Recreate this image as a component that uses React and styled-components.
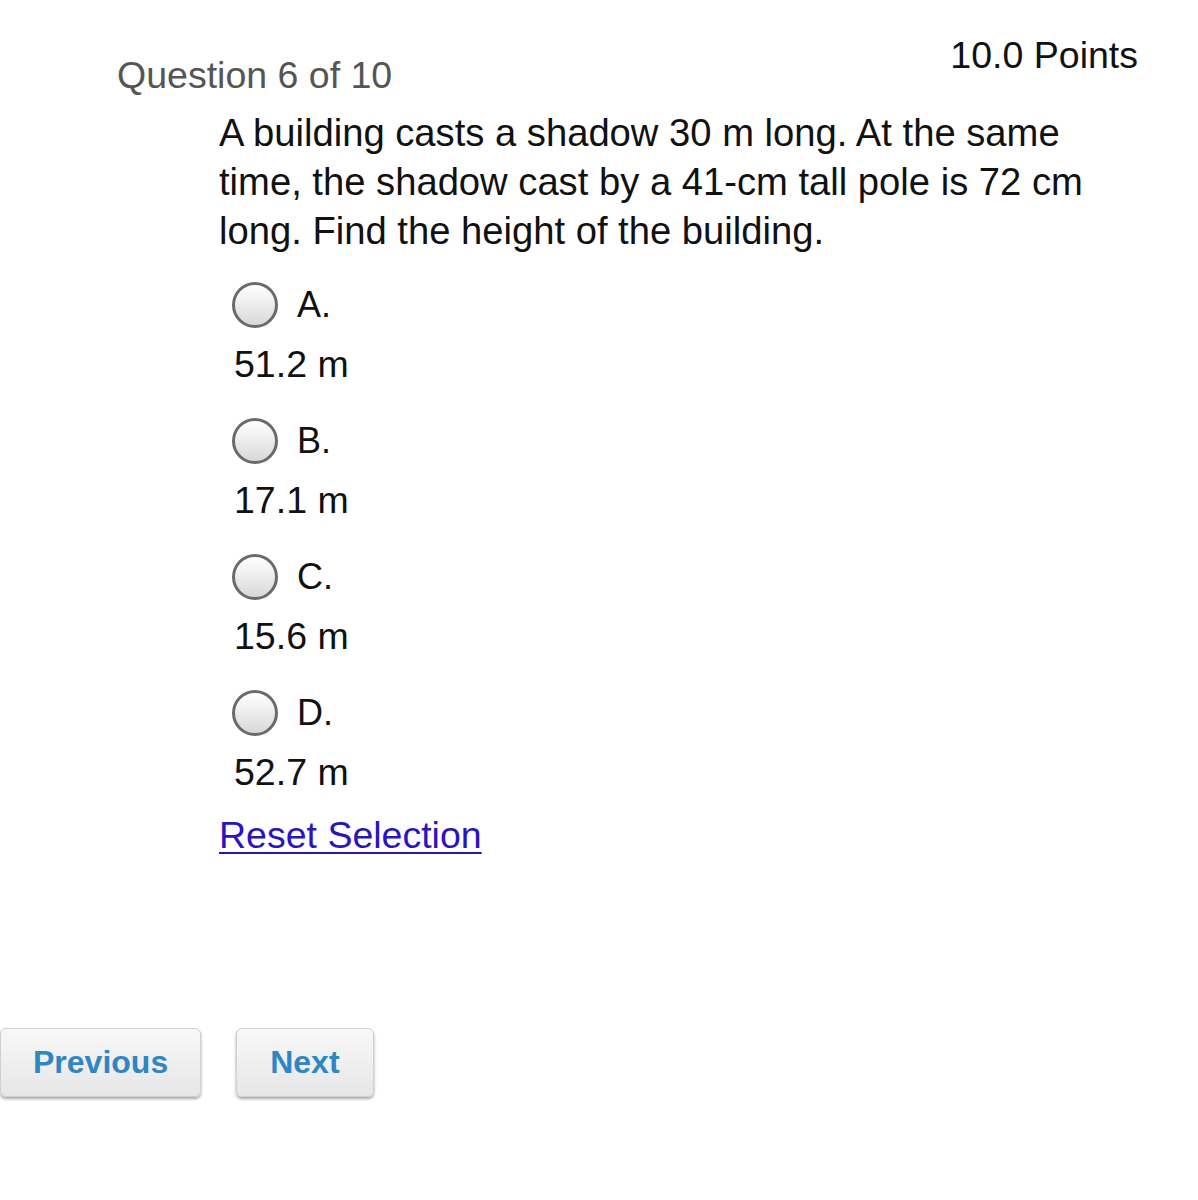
import React from 'react';
import styled, { createGlobalStyle } from 'styled-components';

const options = [
  { letter: 'A.', answer: '51.2 m' },
  { letter: 'B.', answer: '17.1 m' },
  { letter: 'C.', answer: '15.6 m' },
  { letter: 'D.', answer: '52.7 m' },
];

const GlobalStyle = createGlobalStyle`
  body {
    margin: 0;
    background: #fff;
    font-family: "Liberation Sans", Arial, Helvetica, sans-serif;
    color: #111;
  }
`;

const Page = styled.div`
  width: 1198px;
  height: 1200px;
  display: flex;
  flex-direction: column;
`;

const Header = styled.div`
  display: flex;
  justify-content: space-between;
  align-items: flex-start;
  padding: 34px 60px 0 117px;
`;

const QuestionLabel = styled.div`
  font-size: 37.5px;
  color: #555;
  margin-top: 20px;
`;

const Points = styled.div`
  font-size: 37.5px;
  color: #111;
`;

const Body = styled.div`
  padding-left: 219px;
  padding-right: 60px;
`;

const Prompt = styled.p`
  margin: 0;
  margin-top: 11px;
  font-size: 38.2px;
  line-height: 49px;
`;

const Option = styled.div`
  margin-top: ${p => (p.first ? '26px' : '31px')};
  padding-left: 13px;
`;

const OptionRow = styled.label`
  display: flex;
  align-items: center;
  gap: 19px;
  font-size: 36px;
  height: 48px;
`;

const Radio = styled.span`
  width: 40px;
  height: 40px;
  border-radius: 50%;
  border: 3px solid #6a6a6a;
  background: linear-gradient(#ffffff, #d8d8d8);
  box-sizing: content-box;
  flex-shrink: 0;
`;

const Answer = styled.div`
  font-size: 37.5px;
  line-height: 44px;
  margin-top: 13px;
  padding-left: 2px;
`;

const ResetLink = styled.a`
  display: inline-block;
  margin-top: 20px;
  font-size: 37.5px;
  color: #2a14c0;
  text-decoration: underline;
  text-decoration-thickness: 2px;
  text-underline-offset: 4px;
`;

const Nav = styled.div`
  display: flex;
  gap: 35px;
  margin-top: 171px;
`;

const NavButton = styled.button`
  height: 69px;
  padding: 0 ${p => p.pad}px;
  font-family: "Liberation Sans", Arial, sans-serif;
  font-weight: bold;
  font-size: 32px;
  color: #2f86c2;
  background: linear-gradient(#f8f8f8, #e6e6e6);
  border: 1px solid #d0d0d0;
  border-radius: 6px;
  box-shadow: 0 2px 3px rgba(0, 0, 0, 0.35);
`;

export default function App() {
  return (
    <Page>
      <GlobalStyle />
      <Header>
        <QuestionLabel>Question 6 of 10</QuestionLabel>
        <Points>10.0 Points</Points>
      </Header>
      <Body>
        <Prompt>
          A building casts a shadow 30 m long. At the same time, the shadow
          cast by a 41-cm tall pole is 72 cm long. Find the height of the
          building.
        </Prompt>
        {options.map((o, i) => (
          <Option key={o.letter} first={i === 0}>
            <OptionRow>
              <Radio />
              {o.letter}
            </OptionRow>
            <Answer>{o.answer}</Answer>
          </Option>
        ))}
        <ResetLink href="#">Reset Selection</ResetLink>
      </Body>
      <Nav>
        <NavButton pad={32}>Previous</NavButton>
        <NavButton pad={33}>Next</NavButton>
      </Nav>
    </Page>
  );
}
